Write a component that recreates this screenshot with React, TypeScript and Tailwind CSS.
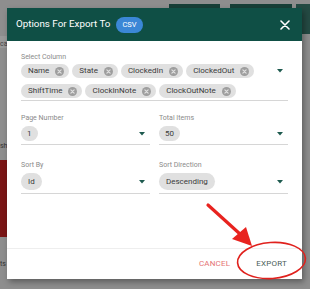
import { ReactNode } from "react";

const columns = ["Name", "State", "ClockedIn", "ClockedOut", "ShiftTime", "ClockInNote", "ClockOutNote"];

const ChipX = () => (
  <svg width="9" height="9" viewBox="0 0 10 10">
    <circle cx="5" cy="5" r="5" fill="#9e9e9e" />
    <path d="M3.2 3.2 L6.8 6.8 M6.8 3.2 L3.2 6.8" stroke="#e0e0e0" strokeWidth="1.3" strokeLinecap="round" />
  </svg>
);

const Caret = () => (
  <svg width="6" height="4" viewBox="0 0 6 4">
    <path d="M0 0 L6 0 L3 3.5 Z" fill="#1e5a4f" />
  </svg>
);

const Chip = ({ label }: { label: string }) => (
  <span className="flex items-center h-[14px] rounded-full bg-[#e0e0e0] text-[8px] text-[#3a3a3a] pl-[7px] pr-[5px] gap-[6px]">
    {label}
    <ChipX />
  </span>
);

const Field = ({ label, children, top }: { label: string; children: ReactNode; top: string }) => (
  <div className={`flex flex-col ${top}`}>
    <span className="text-[7px] text-[#8a8a8a] leading-none">{label}</span>
    <div className="flex items-center justify-between border-b border-[#d6d6d6] pt-[4px] pb-[3px] pr-[5px]">
      {children}
      <Caret />
    </div>
  </div>
);

export default function App() {
  return (
    <div className="relative w-[310px] h-[289px] overflow-hidden bg-[#8e8e8e] font-['Roboto','Liberation_Sans',sans-serif]">
      {/* page behind the overlay */}
      <div className="absolute left-[169px] top-[4px] w-[51px] h-[6px] bg-[#173f37]" />
      <div className="absolute left-[230px] top-[4px] w-[62px] h-[6px] bg-[#173f37]" />
      <div className="absolute left-[296px] top-[4px] w-[14px] h-[30px] bg-[#244a43]" />
      <div className="absolute left-0 top-[36px] w-[10px] h-[12px] bg-[#999]" />
      <span className="absolute left-0 top-[39px] text-[7px] text-[#444]">ca</span>
      <span className="absolute left-0 top-[141px] text-[7px] text-[#333]">sh</span>
      <div className="absolute left-0 top-[160px] w-[10px] h-[77px] bg-[#7a1515]" />
      <span className="absolute left-0 top-[259px] text-[7px] text-[#333]">ts</span>

      {/* dialog */}
      <div className="absolute left-[7px] top-[8px] w-[295px] h-[271px] bg-white flex flex-col shadow-[2px_3px_6px_rgba(0,0,0,0.35)]">
        <div className="h-[33px] bg-[#0f4f45] flex items-center justify-between pl-[9px] pr-[12px]">
          <div className="flex items-center gap-[6px]">
            <span className="text-[9.8px] text-white">Options For Export To</span>
            <span className="h-[16px] px-[6px] rounded-full bg-[#3b87d6] text-white text-[7.5px] flex items-center">CSV</span>
          </div>
          <svg width="10" height="10" viewBox="0 0 10 10">
            <path d="M1 1 L9 9 M9 1 L1 9" stroke="white" strokeWidth="1.6" strokeLinecap="round" />
          </svg>
        </div>

        <div className="flex-1 flex flex-col px-[14px] pt-[13px]">
          <span className="text-[7px] text-[#8a8a8a] leading-none">Select Column</span>
          <div className="flex items-start justify-between border-b border-[#d6d6d6] pt-[3px] pb-[2px] pr-[5px]">
            <div className="flex flex-wrap gap-x-[3px] gap-y-[6px] w-[245px]">
              {columns.map((c) => (
                <Chip key={c} label={c} />
              ))}
            </div>
            <div className="pt-[5px]">
              <Caret />
            </div>
          </div>

          <div className="grid grid-cols-2 gap-x-[9px]">
            <Field label="Page Number" top="pt-[14px]">
              <span className="h-[15px] px-[6px] rounded-full bg-[#e0e0e0] text-[8px] text-[#3a3a3a] flex items-center">1</span>
            </Field>
            <Field label="Total Items" top="pt-[14px]">
              <span className="h-[15px] px-[6px] rounded-full bg-[#e0e0e0] text-[8px] text-[#3a3a3a] flex items-center">50</span>
            </Field>
            <Field label="Sort By" top="pt-[17px]">
              <span className="h-[17px] px-[7px] rounded-full bg-[#e0e0e0] text-[8px] text-[#3a3a3a] flex items-center">Id</span>
            </Field>
            <Field label="Sort Direction" top="pt-[17px]">
              <span className="h-[17px] px-[7px] rounded-full bg-[#e0e0e0] text-[8px] text-[#3a3a3a] flex items-center">Descending</span>
            </Field>
          </div>
        </div>

        <div className="h-[31px] border-t border-[#eeeeee] flex items-center justify-end gap-[26px] pr-[15px]">
          <span className="text-[8px] text-[#e57373] tracking-[0.2px]">CANCEL</span>
          <span className="text-[8px] text-[#4b5d58] tracking-[0.2px]">EXPORT</span>
        </div>
      </div>

      {/* annotation */}
      <svg className="absolute left-0 top-0" width="310" height="289" viewBox="0 0 310 289">
        <line x1="208" y1="205" x2="240" y2="234" stroke="#e8231f" strokeWidth="3.2" strokeLinecap="round" />
        <path d="M252 246 L232 239 L246 227 Z" fill="#e8231f" />
        <ellipse cx="271.5" cy="260.5" rx="34" ry="18" fill="none" stroke="#e0211d" strokeWidth="1.6" transform="rotate(-4 271.5 260.5)" />
      </svg>
    </div>
  );
}
